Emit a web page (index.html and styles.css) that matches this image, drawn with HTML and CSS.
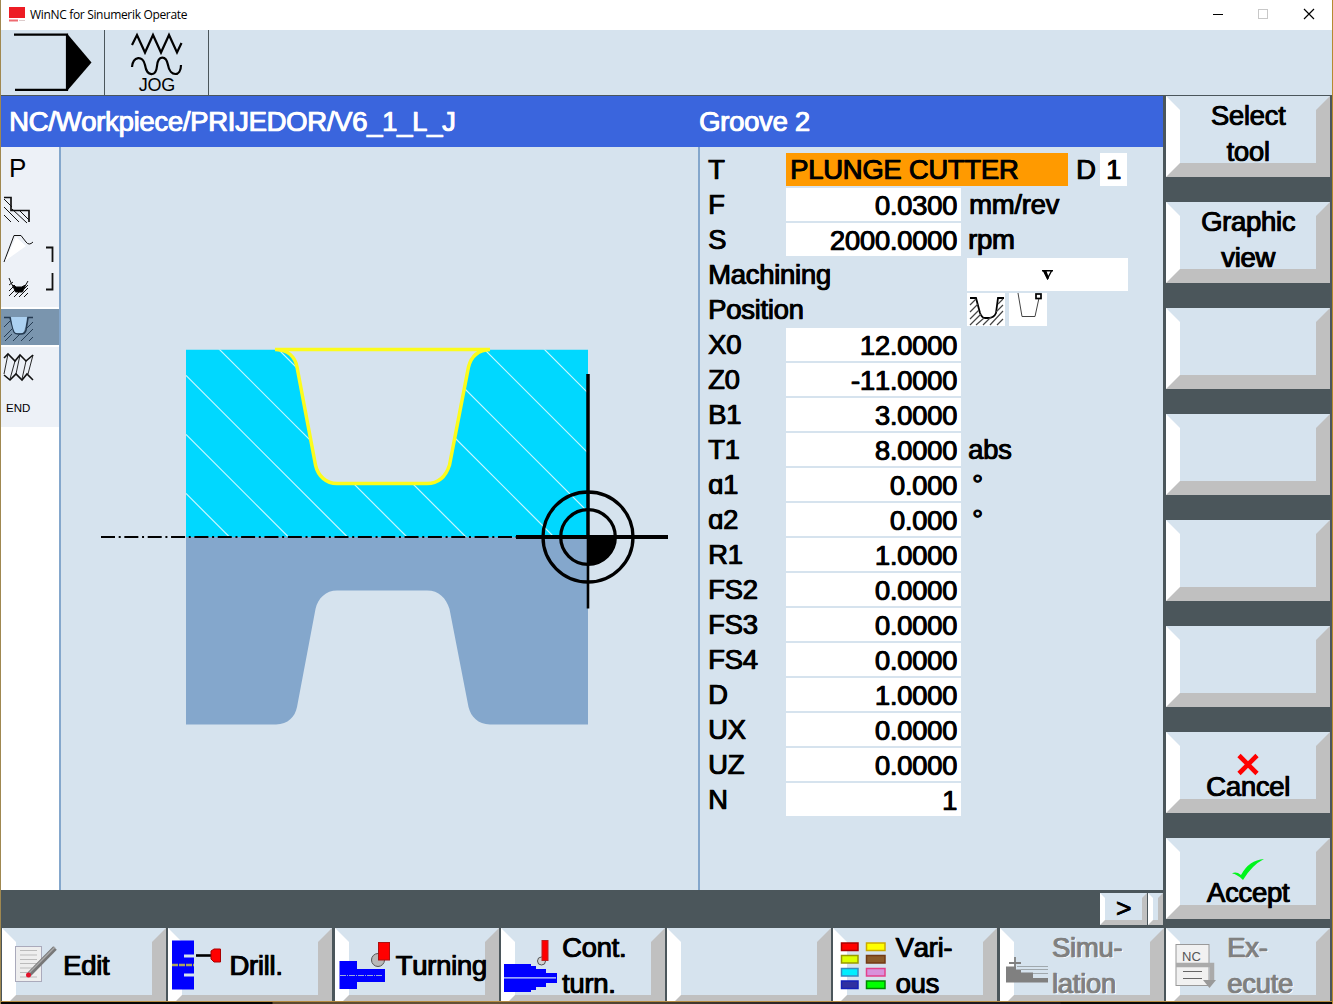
FILE: index.html
```html
<!DOCTYPE html>
<html lang="en">
<head>
<meta charset="utf-8">
<title>WinNC for Sinumerik Operate</title>
<link rel="stylesheet" href="styles.css">
</head>
<body>
<div class="window">
  <header class="titlebar">
    <svg class="logo" width="17" height="17" viewBox="0 0 17 17"><rect width="16" height="11" fill="#ed1c24"/><path d="M0 13.5h9" stroke="#ee6a70" stroke-width="2"/><path d="M10 13.5h6" stroke="#dcc" stroke-width="1"/></svg>
    <span class="caption">WinNC for Sinumerik Operate</span>
    <svg class="controls" width="110" height="30" viewBox="1210 0 110 30" fill="none"><path d="M1213 14.5h10" stroke="#000"/><rect x="1258.500" y="9.500" width="9" height="9" stroke="#c8c8c8"/><path d="M1304 9l10 10M1314 9l-10 10" stroke="#000" stroke-width="1.200"/></svg>
  </header>

  <div class="modes">
    <div class="mode"><svg width="103" height="65" viewBox="1 30 103 65"><path d="M14 34.700H67V89.800H15" fill="none" stroke="#000" stroke-width="2.200"/><path d="M67 33.500L91.500 62.500L67 91z"/></svg></div>
    <div class="mode"><svg width="103" height="65" viewBox="105 30 103 65"><g fill="none" stroke="#000" stroke-width="2.200"><path d="M132 45L137 35L145 52.500L153 35L161 52.500L169 35L177 52.500L181.500 43"/><path d="M132 67C133 56 143 55 145 65C147 77 156 77 157 66C158 55 166 55 168 65C170 77 181 77 181 65"/></g><text class="jog" x="156.800" y="91" text-anchor="middle">JOG</text></svg></div>
  </div>

  <div class="workspace">
    <div class="main">
      <div class="heading"><span class="path">NC/Workpiece/PRIJEDOR/V6_1_L_J</span><span>Groove 2</span></div>
      <div class="content">
        <nav class="steps">
          <svg width="58" height="280" viewBox="1 147 58 280">
            <rect x="1" y="147" width="58" height="280" fill="#edf1f7"/>
            <rect x="1" y="307" width="58" height="40" fill="#fff"/><rect x="1" y="309" width="58" height="36" fill="#7a95ae"/>
            <text class="step-p" x="9" y="177">P</text>
            <g fill="none" stroke="#111" stroke-width="1">
              <path d="M4 197.500H11V210.500H29V222" stroke-width="1.700"/>
              <path d="M4 199l8 8M4 207l15 15M4 215l7 7M12 209l15 14M20 211l9 9"/>
              <path d="M4 262L14 235.500H21L26 242Q29 246 33 242"/><path d="M5 261L16 237L26 246z" fill="#fff" stroke="none"/>
              <path d="M46 247.500h6.500V262M52.500 273v16.500H46" stroke-width="1.800"/>
              <path d="M9 278Q14 291 18 291Q23 291 28 281M9 285l4-3M9 291l6-6M9 296l8-8M14 297l6-6M19 297l9-9M24 297l4-4M22 291l6-6"/><path d="M12.500 285l4 2h5l4-2-3 7h-7z" fill="#000"/>
              <g stroke="#253b52"><path d="M4 317.500H10L14 332Q15 334 18 334H21Q25 334 26 330L28 317.500H33" stroke-width="1.600"/><path d="M4 327l6-6M4 337l9-9M13 341l7-7M5 341l7-7M21 341l12-12M26 329l7-7M29 341l4-4"/></g>
              <path d="M11 317H27Q25 333 22 333H16Q13 332 11 317z" fill="#acd1f1" stroke="none"/>
              <path d="M4 358L8 354L15 361L20 355L26 361L33 355M4 375L10 380L16 374L22 380L27 374L33 380" stroke-width="1.600"/><path d="M4 374L8 354M10 379L15 361M16 374L20 355M22 379L26 361M28 374L33 355" stroke-width=".9"/>
            </g>
            <text class="step-end" x="6" y="411.500">END</text>
          </svg>
        </nav>

        <section class="drawing">
          <svg width="637" height="743" viewBox="61 147 637 743">
            <defs><clipPath id="stock"><path d="M186 349.500H276C288 350 295 357 297 367L315.500 465C318 476 326 484 337 484H427C439 484 446 476 449.500 465L468.500 367C471 357 478 350 490 349.500H588V537H186z"/></clipPath></defs>
            <g clip-path="url(#stock)"><path d="M186 349.500H588V537H186z" fill="#00d8ff"/>
              <path d="M186 493.500l50 50M186 434.500l110 110M186 375.500l170 170M213 343l200 200M272 343l200 200M443 426l120 120M443 367l160 160M479 344l130 130M537 342l60 60" fill="none" stroke="#c4f7ff" stroke-width="1.200"/></g>
            <path d="M186 537H588V724.500H490C478 724 471 717 468.500 707L449.500 609C446 598 439 590.500 427 590.500H337C326 590.500 318 598 315.500 609L297 707C295 717 288 724 276 724.500H186z" fill="#84a7cc"/>
            <path d="M275 349.500H490C478 350 471 357 468.500 367L449.500 465C446 476 439 483.500 427 483.500H337C326 483.500 318 476 315.500 465L297 367C295 357 288 350 276 349.500" fill="none" stroke="#fcfc1c" stroke-width="3.500"/>
            <path d="M101 537H517" stroke="#000" stroke-width="1.800" stroke-dasharray="14 3.700 2 3.650"/>
            <g fill="none" stroke="#000" stroke-width="3.300"><circle cx="588" cy="537" r="45"/><circle cx="588" cy="537" r="27.300"/><path d="M516 537H668" stroke-width="3.800"/><path d="M588 374V537" stroke-width="3.500"/><path d="M588 537V608.500" stroke-width="2.600"/></g>
            <path d="M588 537H616A28 28 0 0 1 588 565z"/>
          </svg>
        </section>

        <section class="params">
          <div class="row"><label>T</label><span class="tool">PLUNGE CUTTER</span><span class="edge">D</span><span class="edge-value">1</span></div>
          <div class="row"><label>F</label><span class="value">0.0300</span><span class="unit feed">mm/rev</span></div>
          <div class="row"><label>S</label><span class="value">2000.0000</span><span class="unit">rpm</span></div>
          <div class="row"><label class="wide">Machining</label><span class="select"><svg width="13" height="12" viewBox="0 0 13 12"><path d="M1 1.700h11M2.800 2L6.500 9.500L10.500 2" fill="none" stroke="#000" stroke-width="1.400"/><path d="M2 2h3.500l2.500 7-1.500 2z"/></svg></span></div>
          <div class="row"><label class="wide">Position</label>
            <svg class="tile" width="38" height="33" viewBox="967 293 38 33"><path d="M970 298h6l4 15q2 5 5 5h3q6 0 8-5l2-15h6" fill="none" stroke="#000" stroke-width="1.800"/><path d="M970 305l6-6M970 312l8-8M970 319l9-9M970 325l11-11M976 325l8-7M983 325l8-8M990 325l13-14M997 325l6-6M996 312l7-7M998 304l5-5" fill="none" stroke="#444" stroke-width="1.200"/></svg>
            <svg class="tile" width="38" height="33" viewBox="1009 293 38 33"><path d="M1018 293l4 23.500h13L1039 298" fill="none" stroke="#444"/><rect x="1036" y="294" width="5" height="4.500" fill="#fff" stroke="#000" stroke-width="1.700"/></svg></div>
          <div class="row"><label>X0</label><span class="value">12.0000</span></div>
          <div class="row"><label>Z0</label><span class="value">-11.0000</span></div>
          <div class="row"><label>B1</label><span class="value">3.0000</span></div>
          <div class="row"><label>T1</label><span class="value">8.0000</span><span class="unit">abs</span></div>
          <div class="row"><label>ɑ1</label><span class="value">0.000</span><span class="unit degree">°</span></div>
          <div class="row"><label>ɑ2</label><span class="value">0.000</span><span class="unit degree">°</span></div>
          <div class="row"><label>R1</label><span class="value">1.0000</span></div>
          <div class="row"><label>FS2</label><span class="value">0.0000</span></div>
          <div class="row"><label>FS3</label><span class="value">0.0000</span></div>
          <div class="row"><label>FS4</label><span class="value">0.0000</span></div>
          <div class="row"><label>D</label><span class="value">1.0000</span></div>
          <div class="row"><label>UX</label><span class="value">0.0000</span></div>
          <div class="row"><label>UZ</label><span class="value">0.0000</span></div>
          <div class="row"><label>N</label><span class="value">1</span></div>
        </section>
      </div>
      <div class="message"><div class="mini">&gt;</div><div class="mini narrow"></div></div>
    </div>

    <aside class="side">
      <div class="key"><span>Select<br>tool</span></div>
      <div class="key"><span>Graphic<br>view</span></div>
      <div class="key"></div>
      <div class="key"></div>
      <div class="key"></div>
      <div class="key"></div>
      <div class="key marked"><span><svg class="mark" width="36" height="36" viewBox="1230 733 36 36"><path d="M1239 755.500l18 18M1257 755.500l-18 18" stroke="#f00" stroke-width="4.600"/></svg><br>Cancel</span></div>
      <div class="key marked"><span><svg class="mark" width="36" height="36" viewBox="1230 839 36 36"><path d="M1232 873.500Q1236 871 1241 875Q1249 860 1264 859Q1252 865 1243 880Q1237 874 1232 873.500z" fill="#00f51c"/></svg><br>Accept</span></div>
    </aside>
  </div>

  <footer class="softkeys">
    <div class="key edit"><svg class="icon" width="164" height="73" viewBox="2 928 164 73"><rect x="15.500" y="946.500" width="26" height="35" fill="#eee" stroke="#aab"/><path d="M20 950.500h17M20 955h17M20 959.500h17M20 963.500h17M20 968h12M20 972.500h10M20 977h17" stroke="#bbb"/><path d="M29.500 974L55 948" stroke="#777" stroke-width="5"/><path d="M29 973L55 947" stroke="#aaa" stroke-width="1.500"/><circle cx="28.500" cy="975" r="2.500" fill="#e3122b"/></svg><span>Edit</span></div>
    <div class="key drill"><svg class="icon" width="164" height="73" viewBox="168 928 164 73"><path d="M172 940.500h22v14h-10v3h10v16h-10v3h10v13h-22z" fill="#00f"/><path d="M172 965h22" stroke="#aaa45f" stroke-width="2.400" stroke-dasharray="6 1"/><path d="M196 955.500h17" stroke="#000" stroke-width="2.600"/><path d="M211 951l3-2h6.500v13h-6.500l-3-3z" fill="#f00" stroke="#a00"/></svg><span>Drill.</span></div>
    <div class="key turning"><svg class="icon" width="164" height="73" viewBox="335 928 164 73"><path d="M339.500 961H357v8h28v13h-28v7h-17.500z" fill="#00f"/><path d="M340 975.500h43" stroke="#9ad" stroke-dasharray="6 1 1 1"/><circle cx="378" cy="960" r="6.500" fill="#b8b8b8" stroke="#555"/><rect x="378.500" y="942.500" width="11" height="17.500" fill="#f00" stroke="#a11"/></svg><span>Turning</span></div>
    <div class="key contour"><svg class="icon" width="164" height="73" viewBox="501 928 164 73"><path d="M504 964h27v2h5v3h10v4h11v10h-11v4h-10v3h-5v2h-27z" fill="#00f"/><path d="M504 977.800h52" stroke="#cfe0fa" stroke-width="1.300"/><circle cx="541.500" cy="961" r="4" fill="#d2d2d2" stroke="#555"/><rect x="542" y="940.500" width="6" height="20" fill="#f00" stroke="#b22"/></svg><span>Cont.<br>turn.</span></div>
    <div class="key"></div>
    <div class="key various"><svg class="icon" width="164" height="73" viewBox="833 928 164 73"><g stroke-width="1.500"><rect x="841.500" y="943" width="16.500" height="7.500" fill="#f00" stroke="#a00"/><rect x="866.500" y="943" width="18.500" height="7.500" fill="#ff0" stroke="#ca0"/><rect x="841.500" y="955.500" width="16.500" height="7.500" fill="#df0" stroke="#990"/><rect x="866.500" y="955.500" width="18.500" height="7.500" fill="#8b5a28" stroke="#733a13"/><rect x="841.500" y="968.500" width="16.500" height="7.500" fill="#0ef" stroke="#388ac0"/><rect x="866.500" y="968.500" width="18.500" height="7.500" fill="#d991db" stroke="#e3418b"/><rect x="841.500" y="981" width="16.500" height="7.500" fill="#3030a0" stroke="#1420b8"/><rect x="866.500" y="981" width="18.500" height="7.500" fill="#0f0" stroke="#080"/></g></svg><span>Vari-<br>ous</span></div>
    <div class="key simulation disabled"><svg class="icon" width="164" height="73" viewBox="1000 928 164 73"><path d="M1006 966.500h10v3h5v3h12v5.500h15v4.500h-42z" fill="#808080"/><path d="M1009 963h12M1015 957v12" stroke="#808080" stroke-width="1.800"/><path d="M1017 966.500h31M1021 969.500h27M1033 973.500h15" stroke="#a0a8ad"/></svg><span>Simu-<br>lation</span></div>
    <div class="key execute disabled"><svg class="icon" width="164" height="73" viewBox="1166 928 164 73"><rect x="1176" y="944.500" width="33" height="41" fill="#f1f1f1" stroke="#999"/><path d="M1176 965h36v16" fill="none" stroke="#aaa" stroke-width="4.500"/><path d="M1203 980h13l-6.500 8z" fill="#999"/><path d="M1183 971.500h19M1183 978.500h19" stroke="#666"/><text class="nc" x="1182" y="961">NC</text></svg><span>Ex-<br>ecute</span></div>
  </footer>
  <div class="desktop"></div>
</div>
</body>
</html>
```
FILE: styles.css
```css
* { box-sizing: border-box; }

body {
  margin: 0;
  background: #080808;
  font-family: "Liberation Sans", Arial, sans-serif;
  font-size: 27.5px;
  font-kerning: none;
  letter-spacing: -0.3px;
  -webkit-text-stroke: 0.7px currentColor;
  text-shadow: 0.6px 0 0 currentColor;
  color: #000;
}

svg { display: block; }

.window {
  width: 1333px;
  height: 1004px;
  display: flex;
  flex-direction: column;
  overflow: hidden;
  background: #4b565b;
  border-left: 1px solid #a08850;
  border-right: 1px solid #b58a30;
}

.titlebar {
  height: 30px;
  flex: none;
  display: flex;
  align-items: center;
  padding: 0 12px 0 8px;
  background: #fff;
  font: 12px "Open Sans", sans-serif;
  letter-spacing: -0.33px;
  -webkit-text-stroke: 0;
  text-shadow: none;
}
.caption { margin: -2px 0 0 4px; }
.controls { margin-left: auto; }

.modes {
  height: 66px;
  flex: none;
  display: flex;
  background: #d6e3ee;
  border-bottom: 1px solid #4b565b;
}
.mode { width: 104px; border-right: 1px solid #4b565b; }
.jog { font-size: 18px; letter-spacing: -0.3px; -webkit-text-stroke: 0.3px #000; text-shadow: none; }

.workspace { height: 832px; flex: none; display: flex; }
.main { width: 1162px; flex: none; }

.heading {
  height: 51px;
  display: flex;
  padding-left: 8px;
  line-height: 51px;
  background: #3a65dd;
  color: #fff;
}
.path { width: 690px; }

.content { height: 743px; display: flex; background: #d6e3ee; }
.steps { width: 60px; flex: none; background: #fff; border-right: 2px solid #84a7cc; }
.step-p { font-size: 26px; -webkit-text-stroke: 0; text-shadow: none; }
.step-end { font-size: 11.5px; letter-spacing: 0; -webkit-text-stroke: 0; text-shadow: none; }
.drawing { width: 637px; flex: none; }

.params {
  flex: 1;
  display: flex;
  flex-direction: column;
  gap: 2px;
  padding: 6px 0 0 8px;
  border-left: 2px solid #84a7cc;
}
.row { height: 33px; display: flex; line-height: 33px; white-space: nowrap; }
.row label { width: 78px; flex: none; }
.row label.wide { width: 259px; }
.tool { width: 282px; padding-left: 4px; background: #ff9a00; }
.edge { width: 32px; padding-left: 8px; }
.edge-value { width: 27px; text-align: center; background: #fff; }
.value { width: 175px; padding: 1px 4px 0 0; text-align: right; background: #fff; }
.unit { padding-left: 7px; }
.feed { padding-left: 8px; }
.degree { padding-left: 11px; }
.select { width: 161px; display: flex; align-items: center; justify-content: center; background: #fff; }
.tile { margin-right: 4px; background: #fff; }

.message { height: 38px; display: flex; justify-content: flex-end; padding-top: 3px; gap: 1px; }
.mini {
  width: 47px;
  height: 32px;
  border: 5px solid #c0c0c0;
  border-left-color: #fff;
  border-top-color: #d6e3ee;
  background: #d6e3ee;
  text-align: center;
  font-size: 26px;
  line-height: 21px;
}
.mini.narrow { width: 15px; }

.side {
  flex: 1;
  display: flex;
  flex-direction: column;
  gap: 25px;
  padding-left: 3px;
}

.key {
  position: relative;
  width: 164px;
  height: 81px;
  flex: none;
  border: 14px solid #c0c0c0;
  border-left-color: #fff;
  border-top-color: #d6e3ee;
  background: #d6e3ee;
  line-height: 36px;
}
.key > span { position: relative; display: block; margin: -12px -14px 0; text-align: center; }
.key.marked > span { margin-top: -13px; }
.mark { position: absolute; left: 64px; top: 0; overflow: visible; }

.softkeys {
  height: 73px;
  flex: none;
  display: grid;
  grid-template-columns: repeat(8, 166.3px);
  padding-left: 1px;
  overflow: hidden;
}
.softkeys .key > span { text-align: left; }
.icon { position: absolute; left: -14px; top: -14px; text-shadow: none; }
.softkeys .edit > span, .softkeys .drill > span, .softkeys .turning > span { margin-top: 6px; }
.edit > span, .drill > span, .turning > span, .contour > span, .execute > span { padding-left: 61px; }
.various > span { padding-left: 62px; }
.simulation > span { padding-left: 52px; }
.disabled { color: #808080; text-shadow: 0.6px 0 0 #808080, 1.5px 1px 0 #fff; }
.nc { font-size: 13px; letter-spacing: 0; fill: #555; -webkit-text-stroke: 0; }

.desktop {
  height: 3px;
  margin: 0 -1px;
  border-top: 1px solid #b58a40;
  background: linear-gradient(90deg, #050505 272px, #5b4930 273px, #655238 500px, #443b30 680px, #211b22 830px, #1d1820 1060px, #080808 1061px);
}
```
